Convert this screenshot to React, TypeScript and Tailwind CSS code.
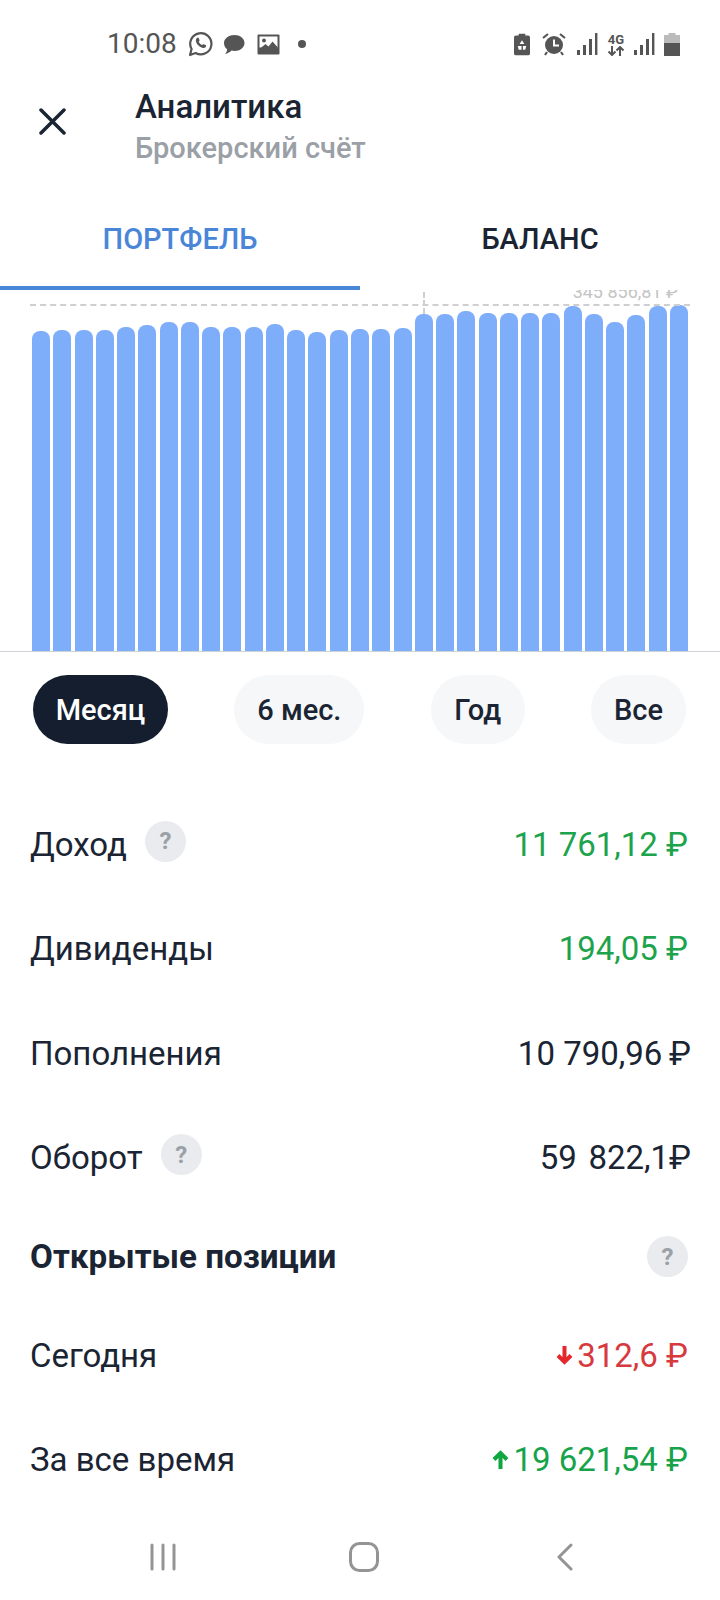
import React from 'react';

const barTops = [331, 330, 330, 330, 327, 325, 322, 322, 327, 327, 327, 324, 330, 332, 330, 329, 329, 328, 314, 314, 311, 313, 313, 313, 313, 306, 314, 322, 315, 306, 305];
const CHART_BOTTOM = 651;

const QuestionBadge: React.FC<{ className?: string }> = ({ className = '' }) => (
  <span className={`flex h-[41px] w-[41px] items-center justify-center rounded-full bg-[#e9ebee] text-[24px] font-bold text-[#9aa0a8] ${className}`}>?</span>
);

const Signal = () => (
  <svg width="21" height="23" viewBox="0 0 21 23" fill="#555">
    <rect x="0" y="17" width="3" height="5" />
    <rect x="6" y="12" width="3" height="10" />
    <rect x="12" y="6" width="3" height="16" />
    <rect x="18" y="0" width="2.4" height="22" />
  </svg>
);

const StatusBar = () => (
  <div className="flex h-[70px] items-center pl-[107px] pr-[40px] pt-[18px] text-[#555]">
    <span className="w-[81px] text-[28px] leading-none">10:08</span>
    <svg width="25" height="26" viewBox="0 0 25 26" fill="none" className="mr-[10px]">
      <path d="M2 24l1.6-6A10.6 10.6 0 1 1 7.6 22z" stroke="#555" strokeWidth="2.2" strokeLinejoin="round" />
      <path d="M8.6 7.2c.9-.9 1.7-.7 2.1.1l.8 1.7c.2.5 0 .9-.8 1.7.7 1.5 1.9 2.7 3.4 3.4.8-.8 1.2-1 1.7-.8l1.7.8c.8.4 1 1.2.1 2.1-1.3 1.3-3.6 1-6.3-1-2.9-2.3-4.4-5.5-2.7-8z" fill="#555" />
    </svg>
    <svg width="22" height="21" viewBox="0 0 22 21" fill="#555" className="mr-[12px]">
      <path d="M11.5 1C17 1 21.5 4.5 21.5 9s-4.5 8-10 8c-1 0-2-.1-3-.4C7 18.2 5 19.5 2 20c1.2-1.3 2-2.8 2.100-4.800C2 13.800 1 11.500 1 9c0-4.500 5-8 10.500-8z" />
    </svg>
    <svg width="23" height="21" viewBox="0 0 23 21" className="mr-[18px]">
      <rect x="0.5" y="0.5" width="22" height="20" fill="#555" rx="1" />
      <rect x="2.5" y="2.5" width="18" height="11" fill="#fff" />
      <circle cx="7" cy="6.5" r="2" fill="#555" />
      <path d="M2.5 15l6-5 3 2.5 4-5 5 5.5v2.5z" fill="#555" />
    </svg>
    <span className="h-[8px] w-[8px] rounded-full bg-[#555]" />
    <div className="ml-auto flex items-center">
      <svg width="16" height="23" viewBox="0 0 17 23" className="mr-[11px]">
        <path d="M5 0h7v2h3a2 2 0 0 1 2 2v17a2 2 0 0 1-2 2H2a2 2 0 0 1-2-2V4a2 2 0 0 1 2-2h3z" fill="#555" />
        <path d="M8.5 7l2.5 4H6zM4 13h4v4H5zM9.5 13H13l-1 4H9.5z" fill="#fff" />
      </svg>
      <svg width="26" height="24" viewBox="0 0 26 24" fill="none" className="mr-[10px]">
        <circle cx="13" cy="13" r="9" fill="#555" />
        <path d="M13 7.5V13.5h5" stroke="#fff" strokeWidth="2" />
        <path d="M2 6l5-4M24 6l-5-4M6 20l-2 3M20 20l2 3" stroke="#555" strokeWidth="2.2" />
      </svg>
      <Signal />
      <div className="mx-[9px] flex w-[18px] flex-col items-center text-[13px] font-bold leading-[13px] text-[#555]">
        <span>4G</span>
        <svg width="18" height="10" viewBox="0 0 18 10" fill="none" stroke="#555" strokeWidth="2">
          <path d="M5 0v9M1.5 5.5 5 9l3.5-3.5M13 10V1M9.5 4.5 13 1l3.5 3.5" />
        </svg>
      </div>
      <Signal />
      <svg width="16" height="23" viewBox="0 0 16 23" className="ml-[9px]">
        <rect x="4.5" y="0" width="7" height="3" fill="#bbb" />
        <rect x="0" y="2" width="16" height="8" fill="#bbb" />
        <rect x="0" y="10" width="16" height="13" fill="#555" />
      </svg>
    </div>
  </div>
);

const Row: React.FC<{ label: string; value: string; color?: string; badge?: boolean; arrow?: 'up' | 'down'; flush?: boolean }> = ({ label, value, color = 'text-[#1a2433]', badge, arrow, flush }) => (
  <div className={`flex h-[104.5px] items-center justify-between pl-[30px] ${flush ? 'pr-[29px]' : 'pr-[32px]'}`}>
    <div className="flex items-center text-[#1a2433]">
      <span className="text-[33px] leading-none">{label}</span>
      {badge && <QuestionBadge className="ml-[18px] -mt-[6px]" />}
    </div>
    <div className={`flex items-center text-[33px] leading-none ${color}`}>
      {arrow === 'down' && (
        <svg width="17" height="20" viewBox="0 0 17 20" fill="none" stroke="#e5262b" strokeWidth="4" className="mr-[4px]">
          <path d="M8.5 1v16M2 10.5l6.5 6.5 6.5-6.5" />
        </svg>
      )}
      {arrow === 'up' && (
        <svg width="17" height="20" viewBox="0 0 17 20" fill="none" stroke="#0ea63f" strokeWidth="4" className="mr-[4px]">
          <path d="M8.5 19V3M2 9.5 8.5 3 15 9.5" />
        </svg>
      )}
      {value}
    </div>
  </div>
);

const Pill: React.FC<{ label: string; active?: boolean; width: string }> = ({ label, active, width }) => (
  <div className={`flex h-[69px] items-center justify-center rounded-full pt-[3px] text-[29px] font-medium ${width} ${active ? 'bg-[#141e2e] text-white' : 'bg-[#f6f7f9] text-[#1a2433]'}`}>
    {label}
  </div>
);

export default function App() {
  return (
    <div className="flex h-[1600px] w-[720px] flex-col overflow-hidden bg-white font-['Roboto',sans-serif]">
      <StatusBar />

      {/* Header */}
      <div className="flex h-[110px] items-start pt-[18px]">
        <div className="flex w-[135px] justify-start pl-[39px] pt-[20px]">
          <svg width="27" height="27" viewBox="0 0 27 27" fill="none" stroke="#1a2433" strokeWidth="3.5" strokeLinecap="round">
            <path d="M2 2l23 23M25 2 2 25" />
          </svg>
        </div>
        <div>
          <div className="text-[33px] font-medium leading-[38px] text-[#1a2433]">Аналитика</div>
          <div className="mt-[4px] text-[29px] font-medium leading-[36px] text-[#9aa0a6]">Брокерский счёт</div>
        </div>
      </div>

      {/* Tabs */}
      <div className="flex h-[110px]">
        <div className="flex w-[360px] items-center justify-center border-b-[4px] border-[#4a86d8] pt-[13px] text-[29px] font-medium text-[#4a86d8]">ПОРТФЕЛЬ</div>
        <div className="flex w-[360px] items-center justify-center pb-[4px] pt-[13px] text-[29px] font-medium text-[#1a2433]">БАЛАНС</div>
      </div>

      {/* Chart */}
      <div className="relative h-[362px] overflow-hidden border-b border-[#cfd2d6]">
        <div className="flex h-[361px] items-end justify-between pl-[32px] pr-[32px]">
          {barTops.map((top, i) => (
            <div key={i} className="w-[18px] rounded-t-[8px] bg-[#7eadfa]" style={{ height: CHART_BOTTOM - top }} />
          ))}
        </div>
        <div className="absolute left-[30px] right-[30px] top-[14px] border-t-2 border-dashed border-[#cfcfcf]" />
        <div className="absolute left-[423px] top-[2px] h-[22px] border-l-2 border-dashed border-[#cfcfcf]" />
        <div className="absolute right-[42px] top-[-7px] text-[18px] leading-none text-[#c4c4c4]">345 856,81 ₽</div>
      </div>

      {/* Period pills */}
      <div className="mt-[23px] flex justify-between pl-[33px] pr-[34px]">
        <Pill label="Месяц" active width="w-[135px]" />
        <Pill label="6 мес." width="w-[130px]" />
        <Pill label="Год" width="w-[94px]" />
        <Pill label="Все" width="w-[95px]" />
      </div>

      {/* Stats */}
      <div className="mt-[48px]">
        <Row label="Доход" value="11 761,12 ₽" color="text-[#1ea34d]" badge />
        <Row label="Дивиденды" value="194,05 ₽" color="text-[#1ea34d]" />
        <Row label="Пополнения" value={'10 790,96\u2009₽'} flush />
        <Row label="Оборот" value={'59\u00a0\u200a822,1₽'} badge flush />
        <div className="flex h-[93px] items-center justify-between pl-[30px] pr-[32px]">
          <span className="text-[33.2px] font-bold text-[#1a2433]">Открытые позиции</span>
          <QuestionBadge />
        </div>
        <Row label="Сегодня" value="312,6 ₽" color="text-[#d63a3f]" arrow="down" />
        <Row label="За все время" value="19 621,54 ₽" color="text-[#16a34a]" arrow="up" />
      </div>

      {/* Android nav bar */}
      <div className="mt-[30px] flex items-center justify-between pl-[150px] pr-[146px]">
        <svg width="26" height="28" viewBox="0 0 26 28" fill="none" stroke="#949494" strokeWidth="3" strokeLinecap="round">
          <path d="M2 2v24M13 2v24M24 2v24" />
        </svg>
        <svg width="30" height="30" viewBox="0 0 30 30" fill="none" stroke="#949494" strokeWidth="3" className="-ml-[4px]">
          <rect x="1.5" y="1.5" width="27" height="27" rx="9" />
        </svg>
        <svg width="18" height="28" viewBox="0 0 18 28" fill="none" stroke="#949494" strokeWidth="3" strokeLinecap="round" strokeLinejoin="round">
          <path d="M15 2 3 14l12 12" />
        </svg>
      </div>
    </div>
  );
}
